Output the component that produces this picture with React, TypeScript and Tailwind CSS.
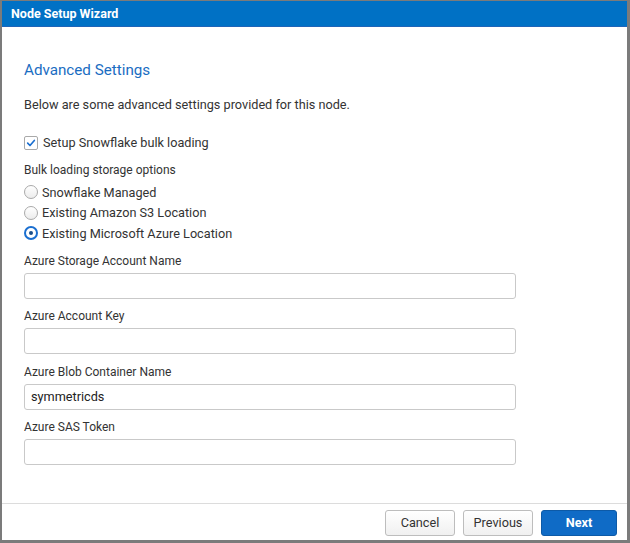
import { useState } from 'react';

const FIELDS = [
	{ label: 'Azure Storage Account Name', value: '' },
	{ label: 'Azure Account Key', value: '' },
	{ label: 'Azure Blob Container Name', value: 'symmetricds' },
	{ label: 'Azure SAS Token', value: '' },
];

const STORAGE = ['Snowflake Managed', 'Existing Amazon S3 Location', 'Existing Microsoft Azure Location'];

function Radio({ checked }: { checked: boolean }) {
	return checked ? (
		<span className="flex h-[14px] w-[14px] items-center justify-center rounded-full border-2 border-[#1b6fd0] bg-white">
			<span className="h-[4px] w-[4px] rounded-full bg-[#1b4f8a]" />
		</span>
	) : (
		<span className="h-[14px] w-[14px] rounded-full border border-[#a9a9a9] bg-gradient-to-b from-white to-[#ececec]" />
	);
}

export default function App() {
	const [storage, setStorage] = useState(2);

	return (
		<div
			className="flex h-[543px] w-[630px] bg-[#7b7b7b] pb-[3px] pl-[2px] pr-[3px] pt-[1px]"
			style={{ fontFamily: 'Roboto, "Liberation Sans", sans-serif' }}
		>
			<div className="flex flex-1 flex-col bg-white">
				<div className="flex h-[26px] items-center border-b border-[#1f64b8] bg-[#0071c5] pl-[9px] pt-[2px] text-[12.5px] font-bold text-white">
					Node Setup Wizard
				</div>

				<div className="flex flex-1 flex-col px-[22px] pt-[33px]">
					<h1 className="text-[15.2px] leading-[20px] text-[#1a6dc2]">Advanced Settings</h1>
					<p className="mt-[16px] text-[12.7px] leading-[18px] text-[#333]">
						Below are some advanced settings provided for this node.
					</p>

					<label className="mt-[20px] flex items-center gap-[5px] text-[12.7px] leading-[18px] text-[#333]">
						<span className="flex h-[14px] w-[14px] items-center justify-center rounded-[2px] border border-[#a9a9a9] bg-white">
							<svg viewBox="0 0 12 12" className="h-[10px] w-[10px]">
								<path d="M2 6.2 L4.8 9 L10 3" fill="none" stroke="#1b6fd0" strokeWidth="2" strokeLinecap="round" strokeLinejoin="round" />
							</svg>
						</span>
						Setup Snowflake bulk loading
					</label>

					<div className="mt-[10px] text-[12px] leading-[16px] text-[#333]">Bulk loading storage options</div>

					<div className="mt-[4px] flex flex-col">
						{STORAGE.map((s, i) => (
							<button
								key={s}
								onClick={() => setStorage(i)}
								className="flex h-[20.5px] items-center gap-[4px] text-left text-[12.7px] text-[#333]"
							>
								<Radio checked={storage === i} />
								{s}
							</button>
						))}
					</div>

					<div className="mt-[9px] flex flex-col gap-[9.6px]">
						{FIELDS.map((f) => (
							<div key={f.label} className="flex flex-col gap-[4px]">
								<span className="text-[12px] leading-[16px] text-[#333]">{f.label}</span>
								<input
									defaultValue={f.value}
									className="h-[26px] w-[492px] rounded-[3px] border border-[#c9c9c9] px-[6px] text-[12.7px] text-[#222] outline-none"
								/>
							</div>
						))}
					</div>
				</div>

				<div className="flex h-[37px] items-center justify-end gap-[8px] border-t border-[#dcdcdc] pr-[10px] pt-[2px]">
					<button className="h-[26px] w-[70px] rounded-[3px] border border-[#bdbdbd] bg-gradient-to-b from-white to-[#f0f0f0] text-[12.7px] text-[#333]">
						Cancel
					</button>
					<button className="h-[26px] w-[70px] rounded-[3px] border border-[#bdbdbd] bg-gradient-to-b from-white to-[#f0f0f0] text-[12.7px] text-[#333]">
						Previous
					</button>
					<button className="h-[26px] w-[76px] rounded-[3px] border border-[#0d5aa7] bg-[#0f6bc6] text-[12.7px] font-bold text-white">
						Next
					</button>
				</div>
			</div>
		</div>
	);
}
